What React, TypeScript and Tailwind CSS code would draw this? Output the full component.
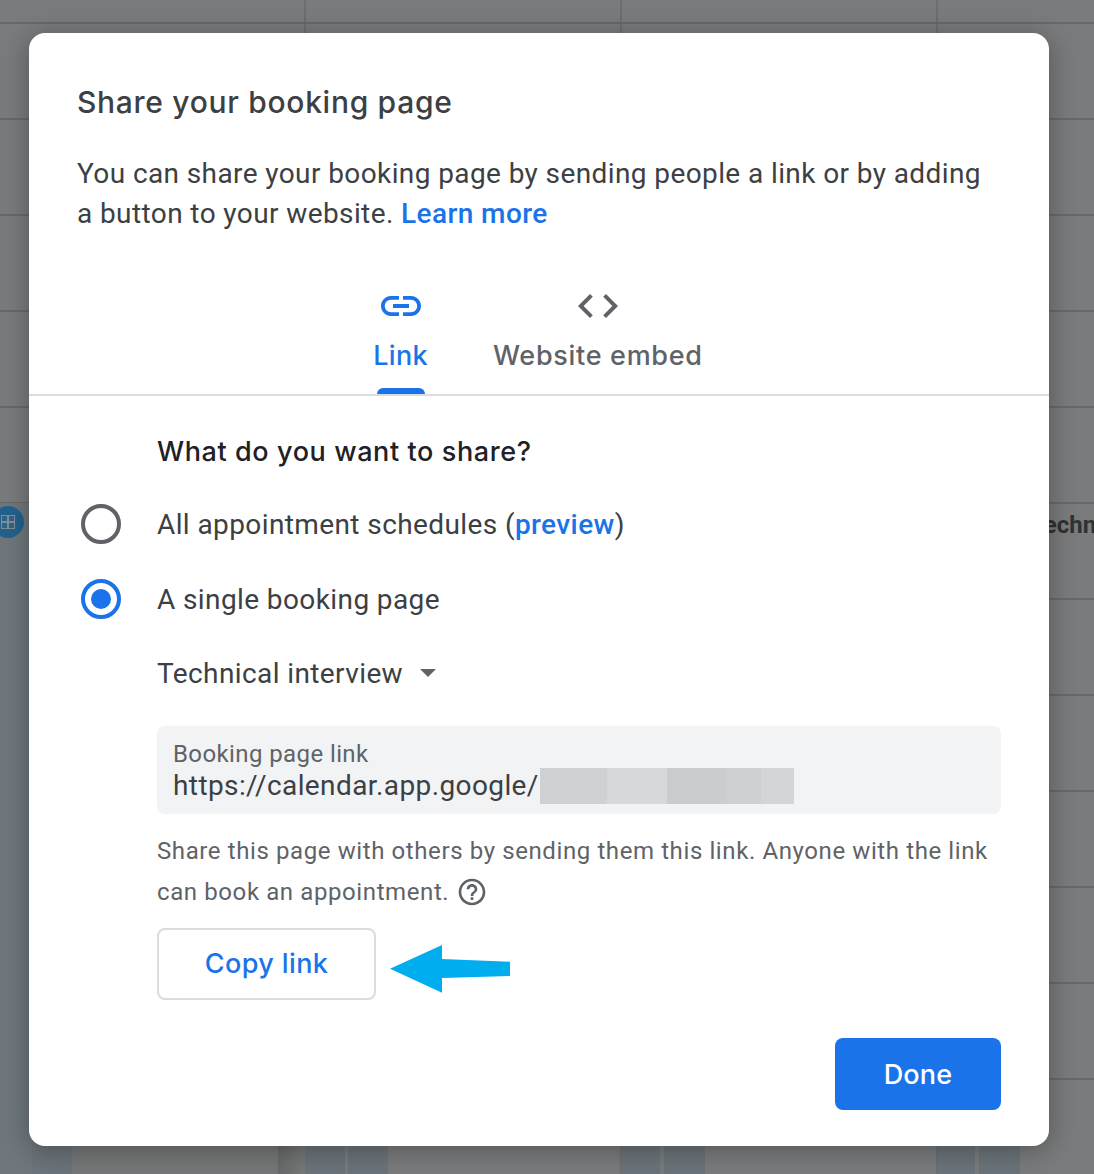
import React from "react";

const ROWS = Array.from({ length: 13 }, (_, i) => i);
const COLS = [0, 1, 2, 3];

function Icon({ d, className }: { d: string; className: string }) {
  return (
    <svg viewBox="0 0 24 24" className={className} fill="currentColor">
      <path d={d} />
    </svg>
  );
}

function Radio({ checked }: { checked?: boolean }) {
  return (
    <span
      className={
        checked
          ? "flex h-10 w-10 items-center justify-center rounded-full border-4 border-[#1a73e8]"
          : "flex h-10 w-10 items-center justify-center rounded-full border-4 border-[#5f6368]"
      }
    >
      {checked ? <span className="h-5 w-5 rounded-full bg-[#1a73e8]" /> : null}
    </span>
  );
}

function EventBlock({ className }: { className: string }) {
  return <div className={"absolute bottom-0 top-[503px] bg-[#6b747a] " + className} />;
}

export default function App() {
  return (
    <div className="relative h-[1174px] w-[1094px] overflow-hidden bg-[#7a7b7c] font-['Roboto',sans-serif]">
      <div className="ml-[-10px] mt-[-72px]">
        {ROWS.map((r) => (
          <div key={r} className="flex h-[96px] border-b-2 border-[#67696a]">
            {COLS.map((c) => (
              <div key={c} className="h-full w-[316px] shrink-0 border-r-2 border-[#6c6e6f]" />
            ))}
          </div>
        ))}
      </div>

      <EventBlock className="left-0 w-[32px] bg-[#6f777d]" />
      <EventBlock className="left-[32px] w-[40px]" />
      <div className="absolute bottom-0 left-[72px] top-[503px] w-[206px] bg-[#767778]" />
      <div className="absolute bottom-0 left-[278px] top-[503px] w-[27px] bg-gradient-to-r from-[#68696a] to-[#787979]" />
      <EventBlock className="left-[305px] w-[40px]" />
      <EventBlock className="left-[348px] w-[40px]" />
      <EventBlock className="left-[621px] w-[39px]" />
      <EventBlock className="left-[664px] w-[41px]" />
      <EventBlock className="left-[937px] w-[38px]" />
      <EventBlock className="left-[979px] w-[41px]" />

      <div className="absolute left-[-8px] top-[506px] flex h-8 w-8 items-center justify-center rounded-full bg-[#23628d]">
        <svg viewBox="0 0 14 14" className="h-[14px] w-[14px]">
          <rect width="14" height="14" fill="#7f8f9b" />
          <rect x="1" y="1" width="5" height="5" fill="#2f6488" />
          <rect x="8" y="1" width="5" height="5" fill="#2f6488" />
          <rect x="1" y="8" width="5" height="5" fill="#2f6488" />
          <rect x="8" y="8" width="5" height="5" fill="#2f6488" />
        </svg>
      </div>

      <div className="absolute left-[1030px] top-[510px] whitespace-nowrap text-[24px] font-bold leading-[30px] text-[#2f3234]">
        Technical interview
      </div>

      <div className="absolute left-[29px] top-[33px] flex h-[1113px] w-[1020px] flex-col rounded-2xl bg-white pt-[49px] shadow-[0_4px_28px_rgba(0,0,0,0.32)]">
        <div className="px-[48px]">
          <h1 className="font-['Inter',sans-serif] text-[30px] font-[450] leading-10 tracking-[0.7px] text-[#3c4043]">
            Share your booking page
          </h1>
          <p className="mt-[32px] text-[28px] leading-10 tracking-[0.4px] text-[#3c4043]">
            You can share your booking page by sending people a link or by adding a button to your website.{" "}
            <span className="font-medium text-[#1a73e8]">Learn more</span>
          </p>
        </div>

        <div className="mt-[48px] flex h-[114px] justify-center gap-[65px] border-b-2 border-[#dadce0] pr-[2px] font-['Inter',sans-serif]">
          <div className="relative flex flex-col items-center text-[#1a73e8]">
            <Icon
              className="h-12 w-12"
              d="M3.9 12c0-1.71 1.39-3.1 3.1-3.1h4V7H7c-2.76 0-5 2.24-5 5s2.24 5 5 5h4v-1.9H7c-1.71 0-3.1-1.39-3.1-3.1zM8 13h8v-2H8v2zm9-6h-4v1.9h4c1.71 0 3.1 1.39 3.1 3.1s-1.39 3.1-3.1 3.1h-4V17h4c2.76 0 5-2.24 5-5s-2.24-5-5-5z"
            />
            <span className="mt-[6px] text-[27px] font-[450] leading-10 tracking-[0.3px]">Link</span>
            <span className="absolute bottom-0 h-[6px] w-12 rounded-t-md bg-[#1a73e8]" />
          </div>
          <div className="flex flex-col items-center text-[#5f6368]">
            <Icon
              className="h-12 w-12"
              d="M9.4 16.6L4.8 12l4.6-4.6L8 6l-6 6 6 6 1.4-1.4zm5.2 0l4.6-4.6-4.6-4.6L16 6l6 6-6 6-1.4-1.4z"
            />
            <span className="mt-[6px] text-[27px] font-[450] leading-10 tracking-[0.7px]">Website embed</span>
          </div>
        </div>

        <div className="flex flex-1 flex-col pl-[128px] pr-[48px] pt-[35px]">
          <h2 className="h-10 font-['Inter',sans-serif] text-[27px] font-medium leading-[42px] tracking-[0.6px] text-[#202124]">What do you want to share?</h2>

          <div className="relative mt-[33px] h-10 text-[28px] leading-[42px] tracking-[0.4px] text-[#3c4043]">
            <span className="absolute left-[-76px] top-0">
              <Radio />
            </span>
            All appointment schedules (<span className="font-medium text-[#1a73e8]">preview</span>)
          </div>
          <div className="relative mt-[35px] h-10 text-[28px] leading-[42px] tracking-[0.4px] text-[#3c4043]">
            <span className="absolute left-[-76px] top-0">
              <Radio checked />
            </span>
            A single booking page
          </div>

          <div className="mt-[34px] flex h-[42px] items-center text-[28px] leading-[44px] tracking-[0.4px] text-[#3c4043]">
            Technical interview
            <span className="ml-[17px] mb-[3px] h-0 w-0 border-x-[8px] border-t-[8px] border-x-transparent border-t-[#5f6368]" />
          </div>

          <div className="mt-[31px] flex h-[88px] flex-col rounded-lg bg-[#f1f3f4] px-4 pt-[12px]">
            <div className="text-[24px] leading-[32px] tracking-[0.4px] text-[#5f6368]">Booking page link</div>
            <div className="mt-[-2px] flex h-9 items-center text-[28px] leading-9 tracking-[0.4px] text-[#3c4043]">
              https://calendar.app.google/
              <span className="ml-[1px] flex h-9 shrink-0">
                <span className="h-full w-[67px] bg-[#d0d1d3]" />
                <span className="h-full w-[60px] bg-[#d7d8da]" />
                <span className="h-full w-[60px] bg-[#cbcccd]" />
                <span className="h-full w-[34px] bg-[#cfd0d1]" />
                <span className="h-full w-[33px] bg-[#d4d5d7]" />
              </span>
            </div>
          </div>

          <p className="mt-[17px] h-[81px] text-[24px] leading-[41px] tracking-[0.6px] text-[#5f6368]">
            Share this page with others by sending them this link. Anyone with the link can book an appointment.
            <Icon
              className="ml-[7px] inline-block h-8 w-8 align-[-8px]"
              d="M11 18h2v-2h-2v2zm1-16C6.48 2 2 6.48 2 12s4.48 10 10 10 10-4.48 10-10S17.52 2 12 2zm0 18c-4.41 0-8-3.59-8-8s3.59-8 8-8 8 3.59 8 8-3.59 8-8 8zm0-14c-2.21 0-4 1.79-4 4h2c0-1.1.9-2 2-2s2 .9 2 2c0 2-3 1.75-3 5h2c0-2.25 3-2.5 3-5 0-2.21-1.79-4-4-4z"
            />
          </p>

          <div className="mt-[16px] flex items-center gap-[14px]">
            <div className="flex h-[72px] w-[219px] items-center justify-center rounded-lg border-2 border-[#dadce0] font-['Inter',sans-serif] text-[27px] font-[450] tracking-[0.4px] text-[#1a73e8]">
              Copy link
            </div>
            <svg viewBox="0 0 121 51" className="mt-[8px] h-[51px] w-[121px]">
              <polygon points="0,25.7 52,2 52,16 120,18.7 120,33 52,35 52,49.7" fill="#00aeef" />
            </svg>
          </div>

          <div className="mt-[38px] flex h-[72px] w-[166px] items-center justify-center self-end rounded-lg bg-[#1a73e8] pt-[2px] font-['Inter',sans-serif] text-[27px] font-[450] tracking-[0.2px] text-white">
            Done
          </div>
        </div>
      </div>
    </div>
  );
}
